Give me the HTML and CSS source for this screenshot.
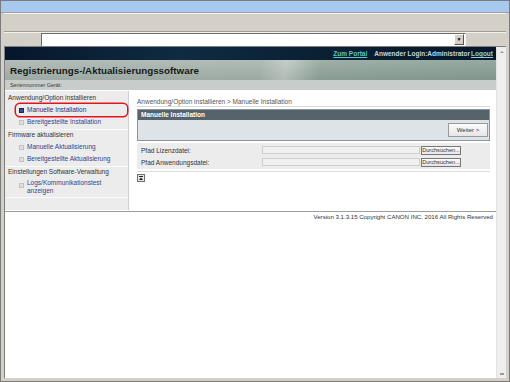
FILE: index.html
```html
<!DOCTYPE html>
<html>

<head>
    <meta charset="utf-8" />
    <title>Registrierungs-/Aktualisierungssoftware</title>
    <link rel="stylesheet" href="styles.css">
</head>

<body>
    <div class="win">
        <div class="titlebar"></div>
        <div class="chrome">
            <div class="toolbar"></div>
            <div class="addressbar">
                <div class="address">
                    <div class="drop">&#9660;</div>
                </div>
            </div>
            <div class="viewport">
                <div class="page">
                    <div class="topbar">
                        <a class="portal" href="#">Zum Portal</a>
                        <span class="user">Anwender Login:Administrator</span>
                        <a class="logout" href="#">Logout</a>
                    </div>
                    <div class="header">Registrierungs-/Aktualisierungssoftware</div>
                    <div class="serial">Seriennummer Gerät:</div>

                    <div class="main">
                        <div class="sidebar">
                            <div class="group">
                                <div class="group-title">Anwendung/Option installieren</div>
                                <div class="item selected"><span class="bullet"></span>Manuelle Installation</div>
                                <div class="item"><span class="bullet"></span>Bereitgestellte Installation</div>
                            </div>
                            <div class="group">
                                <div class="group-title">Firmware aktualisieren</div>
                                <div class="item"><span class="bullet"></span>Manuelle Aktualisierung</div>
                                <div class="item"><span class="bullet"></span>Bereitgestellte Aktualisierung</div>
                            </div>
                            <div class="group">
                                <div class="group-title">Einstellungen Software-Verwaltung</div>
                                <div class="item multi"><span class="bullet"></span>Logs/Kommunikationstest<br />anzeigen</div>
                            </div>
                        </div>

                        <div class="content">
                            <div class="crumb">Anwendung/Option installieren &gt; Manuelle Installation</div>
                            <div class="panel">
                                <div class="panel-title">Manuelle Installation</div>
                                <div class="panel-body">
                                    <button class="btn next">Weiter &gt;</button>
                                </div>
                            </div>
                            <div class="form">
                                <div class="row">
                                    <span class="label">Pfad Lizenzdatei:</span>
                                    <span class="file"></span>
                                    <button class="btn browse">Durchsuchen...</button>
                                </div>
                                <div class="row">
                                    <span class="label">Pfad Anwendungsdatei:</span>
                                    <span class="file"></span>
                                    <button class="btn browse">Durchsuchen...</button>
                                </div>
                            </div>
                            <div class="totop">
                                <svg width="8" height="8" viewBox="0 0 8 8">
                                    <rect x="0.5" y="0.5" width="7" height="7" fill="#e6e6e6" stroke="#6f6f6f" />
                                    <rect x="2" y="2" width="4" height="1" fill="#222" />
                                    <path d="M4 3.5 L6 6 L2 6 Z" fill="#222" />
                                </svg>
                            </div>
                        </div>
                    </div>

                    <div class="footer">Version 3.1.3.15 Copyright CANON INC. 2016 All Rights Reserved</div>
                </div>
                <div class="scroll">
                    <span class="arrow-up"></span>
                    <span class="arrow-down"></span>
                </div>
            </div>
        </div>
    </div>
</body>

</html>
```

FILE: styles.css
```css
* {
    box-sizing: border-box;
}

body {
    margin: 0;
    width: 510px;
    height: 382px;
    overflow: hidden;
    background: #d4d0c8;
    font-family: "Liberation Sans", Arial, sans-serif;
    font-size: 6.5px;
    color: #333;
}

.win {
    height: 382px;
    border: 1px solid #7b7b7b;
    display: flex;
    flex-direction: column;
}

.titlebar {
    height: 12px;
    background: #a7c9ef;
    border-bottom: 1px solid #a3a3a3;
}

.chrome {
    flex: 1;
    display: flex;
    flex-direction: column;
    padding: 0 3px 3px 3px;
    min-height: 0;
}

.toolbar {
    height: 19px;
    border-top: 1px solid #f2f0ea;
    border-bottom: 1px solid #a09c94;
    box-shadow: 0 1px 0 #f4f2ec;
}

.addressbar {
    height: 14px;
    padding: 1px 0 0 37px;
}

.address {
    width: 425px;
    height: 13px;
    background: #fff;
    border-top: 1px solid #6a6a6a;
    border-left: 1px solid #6a6a6a;
    border-right: 1px solid #f4f4f4;
    display: flex;
    justify-content: flex-end;
}

.drop {
    width: 10px;
    height: 11px;
    margin: 0 1px 0 0;
    background: #d4d0c8;
    border: 1px solid;
    border-color: #fff #555 #555 #fff;
    font-size: 5px;
    line-height: 9px;
    text-align: center;
    color: #000;
}

.viewport {
    flex: 1;
    display: flex;
    border-top: 1px solid #7e7e7e;
    border-left: 1px solid #7e7e7e;
    min-height: 0;
}

.page {
    flex: 1;
    background: #fff;
}

.scroll {
    width: 10px;
    background: #eeeeee;
    border-left: 1px solid #e2e2e2;
    display: flex;
    flex-direction: column;
    justify-content: space-between;
    align-items: center;
    padding: 4px 0 3px;
}

.arrow-up {
    border: 2px solid transparent;
    border-bottom: 2px solid #9a9a9a;
    border-top: 0;
}

.arrow-down {
    width: 4px;
    height: 2px;
    background: #9a9a9a;
}

/* page */

.topbar {
    height: 13px;
    background: linear-gradient(90deg, #07162a, #0f2b41 35%, #0a2033 65%, #07172a);
    display: flex;
    justify-content: flex-end;
    align-items: center;
    padding-right: 3px;
    font-weight: bold;
    font-size: 6.5px;
}

.topbar a {
    color: #5dc6c8;
}

.portal {
    margin-right: 7px;
}

.user {
    color: #c7d6de;
    margin-right: 1px;
}

.logout {
    color: #88d2e0 !important;
}

.header {
    height: 20px;
    background:
        linear-gradient(180deg, rgba(255, 255, 255, 0.12), rgba(0, 0, 0, 0.06)),
        linear-gradient(100deg, #a8b4af 0%, #a6b3ad 52%, #bcc7c2 57%, #91a59c 64%, #889e94 100%);
    color: #151a18;
    font-weight: bold;
    font-size: 9.8px;
    line-height: 21px;
    padding-left: 5px;
}

.serial {
    height: 10px;
    background: #c8cccb;
    font-size: 5.4px;
    line-height: 10px;
    padding-left: 5px;
    color: #3a3a3a;
    margin-bottom: 1px;
}

.main {
    display: flex;
    height: 119px;
}

.sidebar {
    width: 124px;
    background: #ececec;
    border-right: 1px solid #cfcfcf;
    padding-top: 2px;
}

.group {
    border-bottom: 1px solid #fafafa;
    padding-bottom: 1px;
}

.group-title {
    line-height: 10px;
    padding-left: 3px;
    margin-bottom: 1px;
    color: #333;
}

.item {
    display: flex;
    align-items: center;
    line-height: 12px;
    margin: 0 1px 0 11px;
    padding-left: 3px;
    color: #34438a;
}

.item.multi {
    align-items: flex-start;
    line-height: 8px;
    padding-top: 1px;
    padding-bottom: 1px;
}

.item.multi .bullet {
    margin-top: 4px;
}

.bullet {
    width: 5px;
    height: 5px;
    border: 1px solid #c2c2c2;
    background: #dedede;
    margin-right: 3px;
    flex: none;
}

.selected {
    border-radius: 4px;
    box-shadow: 0 0 0 1.5px #e3141f;
    color: #1f2d7c;
}

.selected .bullet {
    border-color: #1b2a52;
    background: #3b4f86;
}

.content {
    flex: 1;
    padding: 7px 6px 0 8px;
}

.crumb {
    line-height: 8px;
    color: #555;
    border-bottom: 1px solid #dadada;
}

.panel {
    margin-top: 2px;
    border: 1px solid #8a969c;
}

.panel-title {
    background: #56636a;
    color: #fff;
    font-weight: bold;
    line-height: 10px;
    padding-left: 3px;
}

.panel-body {
    background: #dde3e6;
    padding: 3px 1px 3px 0;
    display: flex;
    justify-content: flex-end;
}

.btn {
    font-family: "Liberation Sans", Arial, sans-serif;
    font-size: 6px;
    color: #333;
    background: linear-gradient(#fbfbfb, #e6e6e6);
    border: 1px solid #9a9a9a;
    padding: 0;
}

.next {
    width: 40px;
    height: 14px;
}

.form {
    margin-top: 2px;
    background: #ececec;
    padding: 1px 0 1px 4px;
}

.row {
    display: flex;
    align-items: center;
    height: 12px;
}

.label {
    width: 121px;
    color: #333;
}

.file {
    width: 158px;
    height: 8px;
    background: #f0f0f0;
    border: 1px solid #cfcfcf;
}

.browse {
    width: 40px;
    height: 9px;
    margin-left: 1px;
    font-size: 5.6px;
    line-height: 7px;
    border-color: #777;
}

.totop {
    margin-top: 2px;
    border-top: 1px solid #dadada;
    padding-top: 2px;
    line-height: 0;
}

.footer {
    margin-top: 1px;
    border-top: 1px solid #9c9c9c;
    line-height: 9px;
    font-size: 6.1px;
    text-align: right;
    padding-right: 3px;
    color: #333;
}
```
